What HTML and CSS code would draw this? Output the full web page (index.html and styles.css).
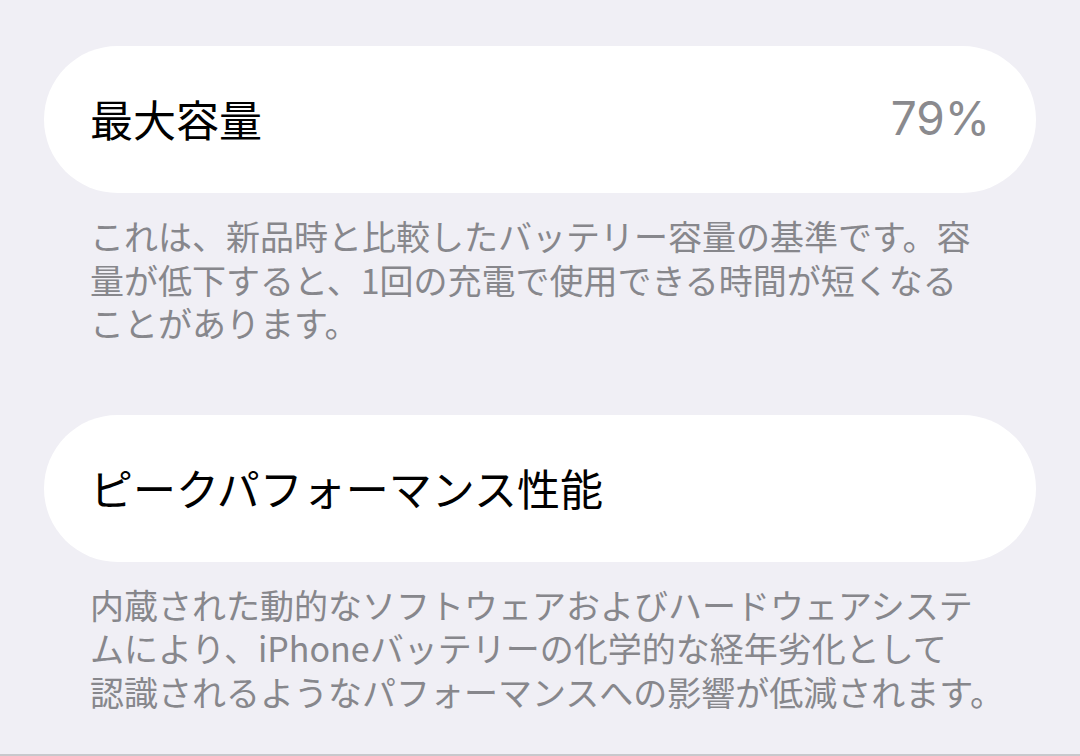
FILE: index.html
```html
<!DOCTYPE html>
<html lang="ja">
<head>
<meta charset="UTF-8">
<meta name="viewport" content="width=device-width, initial-scale=1.0">
<link rel="stylesheet" href="styles.css">
<title>バッテリーの状態</title>
</head>
<body>
  <div class="screen">
    <section class="group">
      <div class="cell">
        <span class="cell-title">最大容量</span>
        <span class="cell-value">79%</span>
      </div>
      <p class="footnote">これは、新品時と比較したバッテリー容量の基準です。容<br>量が低下すると、1回の充電で使用できる時間が短くなる<br>ことがあります。</p>
    </section>

    <section class="group">
      <div class="cell">
        <span class="cell-title">ピークパフォーマンス性能</span>
      </div>
      <p class="footnote">内蔵された動的なソフトウェアおよびハードウェアシステ<br>ムにより、iPhoneバッテリーの化学的な経年劣化として<br>認識されるようなパフォーマンスへの影響が低減されます。</p>
    </section>
  </div>
</body>
</html>
```

FILE: styles.css
```css
html, body {
  margin: 0;
  padding: 0;
}

body {
  background-color: #f0eff5;
  font-family: "Noto Sans CJK JP", "Noto Sans", sans-serif;
  overflow: hidden;
}

.screen {
  box-sizing: border-box;
  height: 756px;
  padding: 46px 44px 0;
  border-bottom: 2px solid #c8c8cc;
}

.group + .group {
  margin-top: 70px;
}

.cell {
  display: flex;
  align-items: center;
  justify-content: space-between;
  height: 147px;
  padding: 0 46px 3px;
  box-sizing: border-box;
  background-color: #fff;
  border-radius: 74px;
}

.cell-title {
  font-size: 43px;
  color: #000;
}

.cell-value {
  font-family: Inter, "Noto Sans", sans-serif;
  font-size: 46px;
  color: #8a8a8e;
}

/* lines are broken by hand; the closing 。 may hang past the edge */
.footnote {
  margin: 21px 0 0;
  padding: 0 46px;
  font-size: 34px;
  line-height: 43.5px;
  color: #87878c;
  white-space: nowrap;
}
```
